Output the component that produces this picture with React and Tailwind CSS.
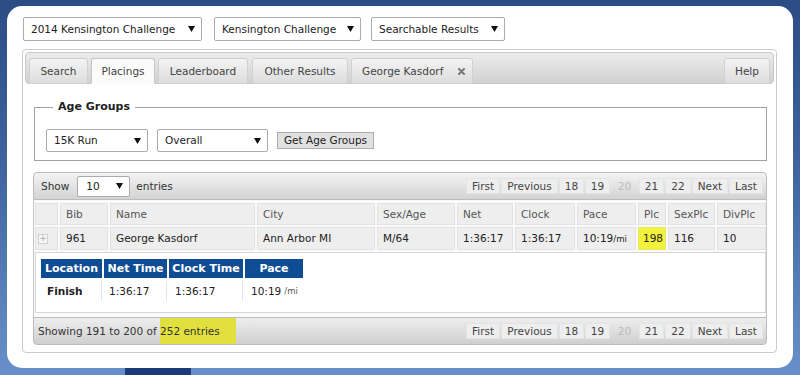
import React from "react";

const Arrow = () => (
  <svg width="7" height="6" viewBox="0 0 7 6" className="shrink-0">
    <path d="M0 0H7L3.5 6Z" fill="#111" />
  </svg>
);

function Drop({ className, label }) {
  return (
    <div className={"flex items-center justify-between bg-white border border-[#aaaaaa] rounded-[2px] pl-[7px] pr-[6px] text-[#222] " + className}>
      <span>{label}</span>
      <Arrow />
    </div>
  );
}

const tabBase = "h-[26px] flex items-center justify-center rounded-t-[3px] border -mb-px text-[#444]";
const tabIdle = tabBase + " border-[#d0d0d0] bg-[linear-gradient(180deg,#f3f3f3,#dddddd)]";
const tabActive = tabBase + " border-[#c6c6c6] border-b-[#fbfbfb] bg-[#fbfbfb] text-[#222]";

function PageBtn({ className, children, disabled }) {
  return (
    <div
      className={
        "h-[16px] flex items-center justify-center " +
        (disabled ? "text-[#bbbbbb] " : "bg-[#eeeeee] border border-[#e4e4e4] text-[#444] ") +
        className
      }
    >
      {children}
    </div>
  );
}

function Pager() {
  return (
    <div className="flex items-center gap-[1px]">
      <PageBtn className="w-[34px]">First</PageBtn>
      <PageBtn className="w-[57px]">Previous</PageBtn>
      <PageBtn className="w-[25px]">18</PageBtn>
      <PageBtn className="w-[25px]">19</PageBtn>
      <PageBtn className="w-[27px]" disabled>20</PageBtn>
      <PageBtn className="w-[25px]">21</PageBtn>
      <PageBtn className="w-[26px]">22</PageBtn>
      <PageBtn className="w-[36px]">Next</PageBtn>
      <PageBtn className="w-[34px]">Last</PageBtn>
    </div>
  );
}

const cellBase = "h-full flex items-center pl-[5px] bg-[#eeeeee] border border-[#e2e2e2] shrink-0";

function Cells({ row }) {
  return (
    <>
      <div className={cellBase + " w-[23px] !pl-[2px]"}>
        {row ? (
          <div className="w-[10px] h-[10px] border border-[#cfcfcf] bg-[#f6f6f6] flex items-center justify-center text-[#aaa] text-[9px] leading-none">+</div>
        ) : null}
      </div>
      <div className={cellBase + " w-[48px]"}>{row ? "961" : "Bib"}</div>
      <div className={cellBase + " w-[145px]"}>{row ? "George Kasdorf" : "Name"}</div>
      <div className={cellBase + " w-[118px]"}>{row ? "Ann Arbor MI" : "City"}</div>
      <div className={cellBase + " w-[78px]"}>{row ? "M/64" : "Sex/Age"}</div>
      <div className={cellBase + " w-[56px]"}>{row ? "1:36:17" : "Net"}</div>
      <div className={cellBase + " w-[60px]"}>{row ? "1:36:17" : "Clock"}</div>
      <div className={cellBase + " w-[59px]"}>
        {row ? (
          <span>
            10:19<span className="text-[8.5px]">/mi</span>
          </span>
        ) : (
          "Pace"
        )}
      </div>
      {row ? (
        <div className="h-full flex items-center pl-[4px] w-[28px] shrink-0 bg-[#f2f23c] border border-[#e8e860]">198</div>
      ) : (
        <div className={cellBase + " w-[28px]"}>Plc</div>
      )}
      <div className={cellBase + " w-[47px]"}>{row ? "116" : "SexPlc"}</div>
      <div className={cellBase + " w-[49px]"}>{row ? "10" : "DivPlc"}</div>
    </>
  );
}

export default function App() {
  return (
    <div className="w-[800px] h-[375px] overflow-hidden flex flex-col bg-[linear-gradient(180deg,#2c4c86_0%,#3f64a0_45%,#6790c8_100%)] font-['DejaVu_Sans',sans-serif] text-[10.5px] leading-none text-[#333]">
      <div className="h-[6px] shrink-0" />
      <div className="flex shrink-0">
        <div className="w-[7px] shrink-0" />
        <div className="w-[786px] h-[362px] rounded-[15px] bg-white pt-[11px] pl-[15px]">
          {/* top dropdowns */}
          <div className="flex items-center pl-[1px] h-[24px]">
            <Drop className="w-[179px] h-[24px]" label="2014 Kensington Challenge" />
            <Drop className="w-[147px] h-[24px] ml-[12px]" label="Kensington Challenge" />
            <Drop className="w-[134px] h-[24px] ml-[10px]" label="Searchable Results" />
          </div>

          {/* tabs container */}
          <div className="mt-[8px] w-[755px] h-[304px] border border-[#cccccc] rounded-[4px] p-[2px] flex flex-col">
            <div className="h-[32px] shrink-0 rounded-[4px] border border-[#c8c8c8] bg-[linear-gradient(180deg,#ececec,#d1d1d1)] pt-[5px] pl-[3px] pr-[3px] flex items-start">
              <div className={tabIdle + " w-[59px]"}>Search</div>
              <div className={tabActive + " w-[64px] ml-[3px]"}>Placings</div>
              <div className={tabIdle + " w-[90px] ml-[3px]"}>Leaderboard</div>
              <div className={tabIdle + " w-[96px] ml-[4px]"}>Other Results</div>
              <div className={tabIdle + " w-[122px] ml-[3px] !justify-start pl-[10px] gap-[15px]"}>
                <span>George Kasdorf</span>
                <svg width="7" height="7" viewBox="0 0 7 7">
                  <path d="M1 1L6 6M6 1L1 6" stroke="#777" strokeWidth="2" strokeLinecap="round" />
                </svg>
              </div>
              <div className="flex-1" />
              <div className={tabIdle + " w-[46px]"}>Help</div>
            </div>

            <div className="flex-1 px-[9px] pt-[16px]">
              {/* fieldset */}
              <fieldset className="border border-[#a0a0a0] pl-[11px] pr-[11px] pb-[8px] pt-[15px] w-[733px]">
                <legend className="ml-[7px] px-[5px] font-bold text-[#222] text-[11px] leading-[14px]">Age Groups</legend>
                <div className="flex items-center">
                  <Drop className="w-[102px] h-[23px]" label="15K Run" />
                  <Drop className="w-[111px] h-[23px] ml-[9px]" label="Overall" />
                  <div className="ml-[9px] w-[97px] h-[17px] flex items-center justify-center bg-[#e1e1e1] border border-[#adadad] text-[#222]">
                    Get Age Groups
                  </div>
                </div>
              </fieldset>

              {/* data table */}
              <div className="mt-[11px] w-[734px] ml-[-1px]">
                <div className="h-[28px] rounded-t-[4px] border border-[#bcbcbc] bg-[linear-gradient(180deg,#f3f3f3,#d3d3d3)] flex items-center pl-[7px] pr-[3px]">
                  <span className="text-[#333]">Show</span>
                  <Drop className="w-[53px] h-[21px] ml-[8px] !pl-[8px]" label="10" />
                  <span className="ml-[6px]">entries</span>
                  <div className="flex-1" />
                  <Pager />
                </div>
                <div className="border-x border-[#c4c4c4] bg-[#fafafa] pl-[1px] pt-[3px] pb-[4px]">
                  <div className="flex gap-[2px] h-[22px] text-[#555]">
                    <Cells />
                  </div>
                  <div className="flex gap-[2px] h-[23px] mt-[2px] text-[#222]">
                    <Cells row />
                  </div>
                  <div className="mt-[2px] w-[731px] h-[61px] border border-[#d6d6d6] bg-white pl-[5px] pt-[6px]">
                    <div className="flex gap-[2px] h-[19px] text-white font-bold text-[11px]">
                      <div className="w-[61px] bg-[#0e4d93] flex items-center justify-center">Location</div>
                      <div className="w-[63px] bg-[#0e4d93] flex items-center justify-center">Net Time</div>
                      <div className="w-[74px] bg-[#0e4d93] flex items-center justify-center">Clock Time</div>
                      <div className="w-[58px] bg-[#0e4d93] flex items-center justify-center">Pace</div>
                    </div>
                    <div className="flex gap-[2px] h-[20px] mt-[3px] text-[#222]">
                      <div className="w-[61px] flex items-center pl-[6px] font-bold border-r border-[#e4e4e4]">Finish</div>
                      <div className="w-[63px] flex items-center pl-[5px] border-r border-[#e4e4e4]">1:36:17</div>
                      <div className="w-[74px] flex items-center pl-[6px] border-r border-[#e4e4e4]">1:36:17</div>
                      <div className="w-[58px] flex items-center pl-[6px]">
                        10:19 <span className="text-[8.5px] text-[#555] ml-[3px]">/mi</span>
                      </div>
                    </div>
                  </div>
                </div>
                <div className="h-[28px] rounded-b-[4px] border border-[#bcbcbc] bg-[linear-gradient(180deg,#eeeeee,#cfcfcf)] flex items-stretch pl-[4px] pr-[3px] overflow-hidden">
                  <span className="flex items-center">Showing 191 to 200 of&nbsp;</span>
                  <span className="flex items-center bg-[#e2e03e] pr-[16px]">252 entries</span>
                  <div className="flex-1" />
                  <div className="flex items-center">
                    <Pager />
                  </div>
                </div>
              </div>
            </div>
          </div>
        </div>
      </div>
      <div className="h-[7px] flex shrink-0">
        <div className="w-[125px]" />
        <div className="w-[66px] bg-[#1a3b78]" />
      </div>
    </div>
  );
}
